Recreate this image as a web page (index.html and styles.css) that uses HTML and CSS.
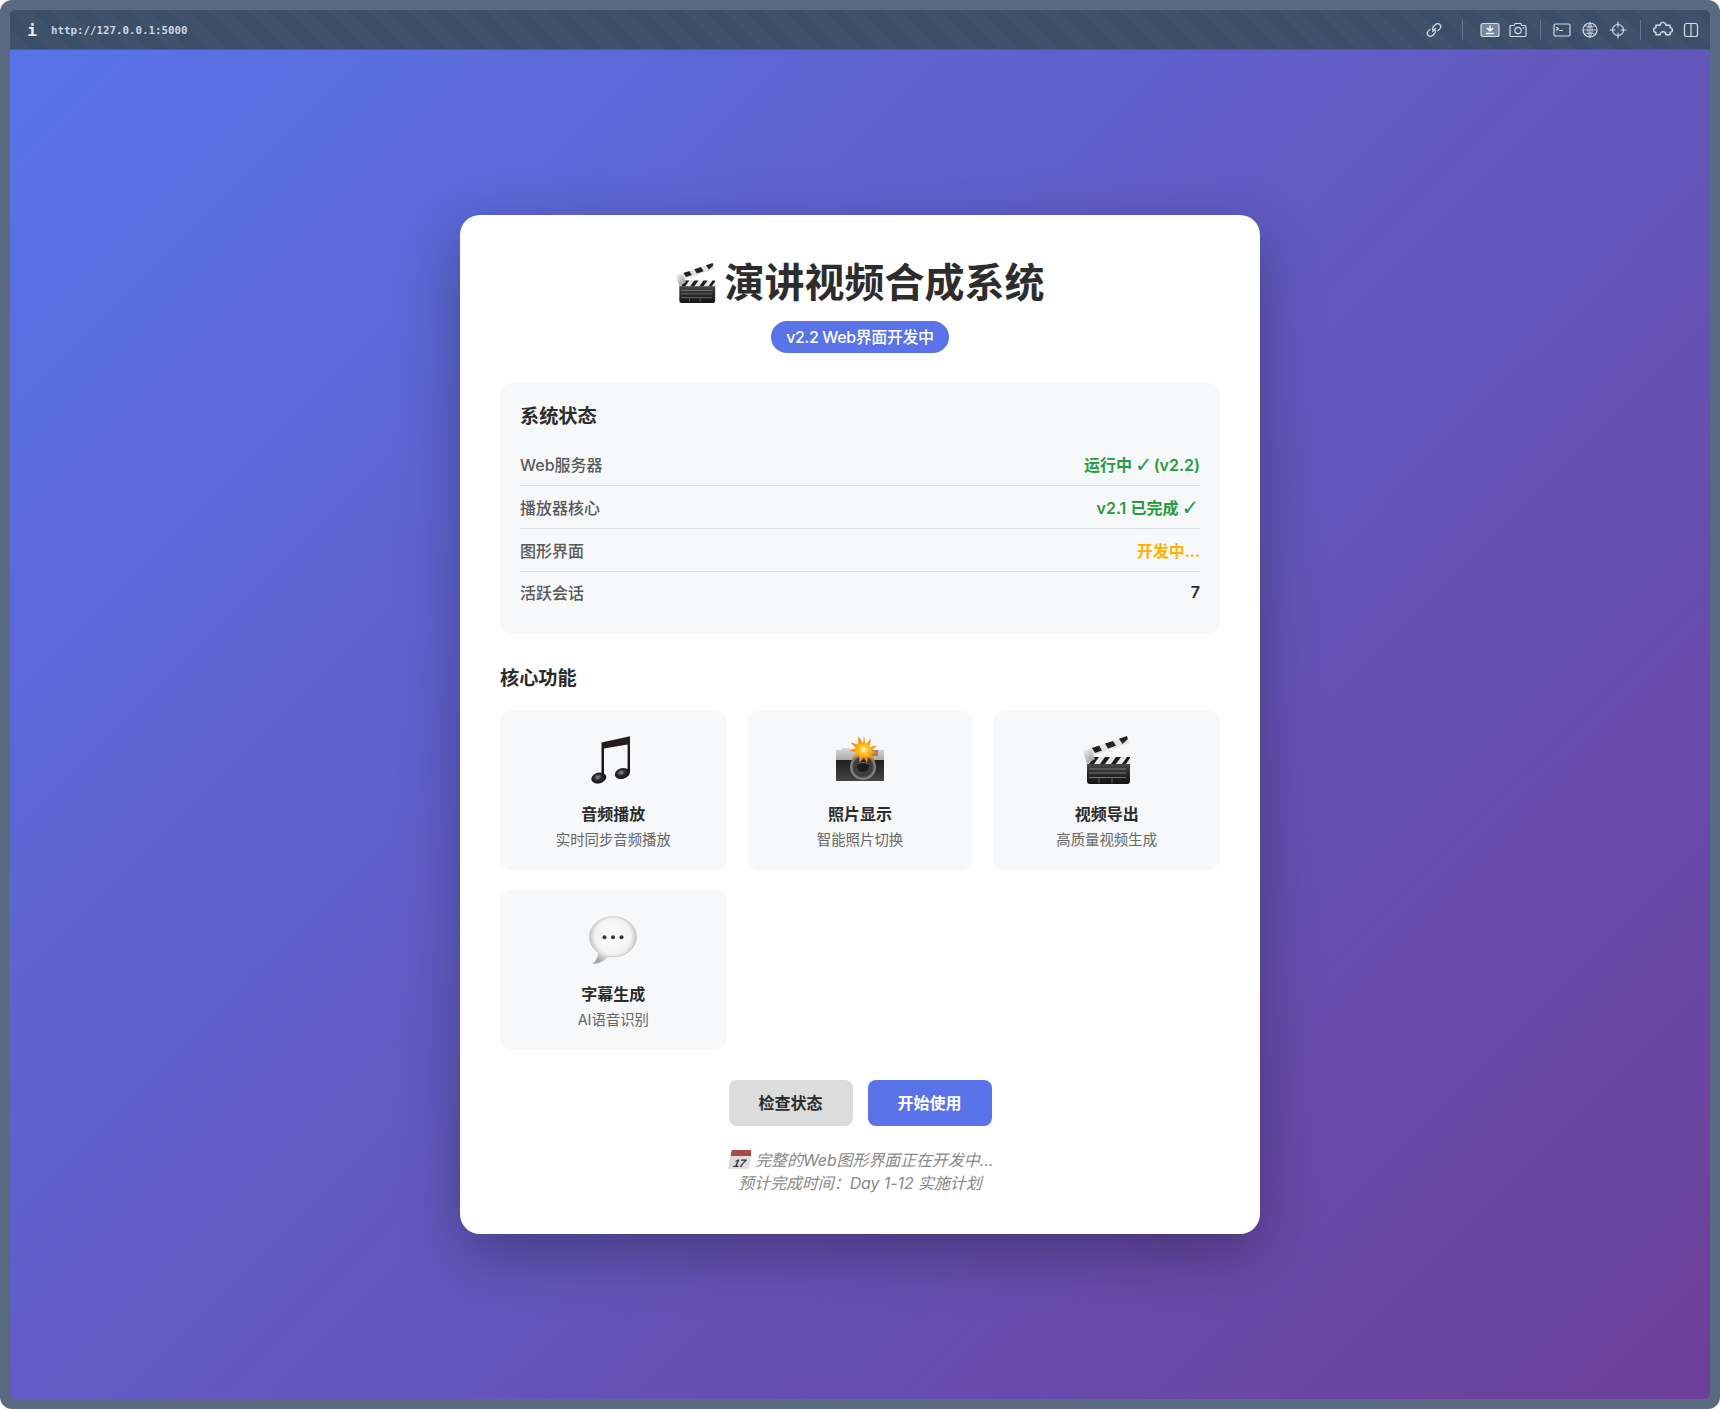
FILE: index.html
```html
<!DOCTYPE html>
<html lang="zh-CN">
<head>
    <meta charset="UTF-8">
    <meta name="viewport" content="width=device-width, initial-scale=1.0">
    <title>演讲视频合成系统</title>
    <link rel="stylesheet" href="styles.css">
</head>
<body>
    <svg class="defs" width="0" height="0" aria-hidden="true">
        <defs>
            <linearGradient id="clapBody" x1="0" y1="0" x2="0" y2="1">
                <stop offset="0" stop-color="#4a4a4a"/>
                <stop offset="0.5" stop-color="#2a2a2a"/>
                <stop offset="1" stop-color="#141414"/>
            </linearGradient>
            <linearGradient id="hinge" x1="0" y1="0" x2="1" y2="1">
                <stop offset="0" stop-color="#f2f2f2"/>
                <stop offset="1" stop-color="#8d8d8d"/>
            </linearGradient>
            <radialGradient id="noteHead" cx="0.45" cy="0.4" r="0.7">
                <stop offset="0" stop-color="#8f8f96"/>
                <stop offset="0.4" stop-color="#2a272b"/>
                <stop offset="1" stop-color="#0e0c0e"/>
            </radialGradient>
            <linearGradient id="noteStem" x1="0" y1="0" x2="0" y2="1">
                <stop offset="0" stop-color="#2a1c20"/>
                <stop offset="1" stop-color="#111"/>
            </linearGradient>
            <radialGradient id="bubble" cx="0.5" cy="0.42" r="0.58">
                <stop offset="0" stop-color="#ffffff"/>
                <stop offset="0.65" stop-color="#f3f3f3"/>
                <stop offset="1" stop-color="#a9a9a9"/>
            </radialGradient>
            <radialGradient id="flash" cx="0.5" cy="0.5" r="0.5">
                <stop offset="0" stop-color="#fffbd6"/>
                <stop offset="0.3" stop-color="#ffc21f"/>
                <stop offset="1" stop-color="#f0700a"/>
            </radialGradient>
            <linearGradient id="cameraTop" x1="0" y1="0" x2="0" y2="1">
                <stop offset="0" stop-color="#d8d8d8"/>
                <stop offset="1" stop-color="#a6a6a6"/>
            </linearGradient>
            <linearGradient id="cameraBody" x1="0" y1="0" x2="0" y2="1">
                <stop offset="0" stop-color="#1e1e1e"/>
                <stop offset="1" stop-color="#454545"/>
            </linearGradient>
            <symbol id="clapper" viewBox="0 0 48 48">
                <path d="M4 27h43v18a3 3 0 0 1-3 3H7a3 3 0 0 1-3-3z" fill="url(#clapBody)"/>
                <path d="M4 21h43v7H4z" fill="#e6e6e6"/>
                <path d="M6 28l5-7h5l-5 7zM17 28l5-7h5l-5 7zM28 28l5-7h5l-5 7zM39 28l5-7h3v1l-4 6z" fill="#1d1d1d"/>
                <path d="M6 33h37M6 37h37M6 41.500h37" stroke="#8a8a8a" stroke-width="0.8"/>
                <path d="M16 42v5M29 42v5" stroke="#777" stroke-width="0.8"/>
                <path d="M0 15L44 0l2 7L3 22z" fill="#e2e2e2"/>
                <path d="M9 12l7-2.400 3 4.900-7 2.400zM22 7.600l8-2.700 3 4.900-8 2.700zM36 2.800L44 0l.8 3-5.300 4.900z" fill="#222"/>
                <path d="M0 15l8-1 4 9-8 5-2-6z" fill="url(#hinge)"/>
            </symbol>
        </defs>
    </svg>

    <div class="window">
        <header class="toolbar">
            <span class="info-mark">i</span>
            <span class="url">http://127.0.0.1:5000</span>
            <div class="tools">
                <svg class="tool" viewBox="0 0 20 20"><path d="M8.500 11.500l3-3M6.200 9.200l-2 2a3 3 0 0 0 4.300 4.300l2-2a3 3 0 0 0 0-4.300M13.800 10.800l2-2a3 3 0 0 0-4.300-4.300l-2 2a3 3 0 0 0 0 4.300"/></svg>
                <span class="tool-sep tool-sep-wide"></span>
                <svg class="tool" viewBox="0 0 20 20"><rect x="1" y="3.500" width="18" height="13" rx="2" fill="#76879c"/><path class="tool-light" d="M10 6v4M7.500 8.500L10 11l2.500-2.500M6.500 13.500h7"/></svg>
                <svg class="tool tool-gap" viewBox="0 0 20 20"><path d="M2 6.500a1 1 0 0 1 1-1h3l1.200-2h5.600l1.200 2h3a1 1 0 0 1 1 1v9a1 1 0 0 1-1 1H3a1 1 0 0 1-1-1z"/><circle cx="10" cy="10.500" r="3.200"/><circle cx="15.500" cy="8" r="0.300"/></svg>
                <span class="tool-sep tool-sep-mid"></span>
                <svg class="tool" viewBox="0 0 20 20"><rect x="2" y="4" width="16" height="12" rx="1.500"/><path d="M4.500 7.500l2 1.300-2 1.300M7.500 10.500h3"/></svg>
                <svg class="tool tool-gap" viewBox="0 0 20 20"><circle cx="10" cy="10" r="7"/><path d="M3 10h14M10 3v14M5 5.500c3 2 7 2 10 0M5 14.500c3-2 7-2 10 0M10 3c-3 4-3 10 0 14M10 3c3 4 3 10 0 14" stroke-width="0.800"/></svg>
                <svg class="tool tool-gap" viewBox="0 0 20 20"><circle cx="10" cy="10" r="5.500"/><path d="M10 2v5M10 13v5M2 10h5M13 10h5"/></svg>
                <span class="tool-sep"></span>
                <svg class="tool" viewBox="1.500 1.500 17 17"><path d="M4 6h3.500a2.500 2.500 0 0 1 5 0H16v2a2 2 0 0 1 0 4v2h-3.500a2.500 2.500 0 0 0-5 0H4v-2a2 2 0 0 1 0-4z"/></svg>
                <svg class="tool tool-gap" viewBox="0 0 20 20"><rect x="3.500" y="3.500" width="13" height="13" rx="2"/><path d="M10 3.500v13"/></svg>
            </div>
        </header>

        <main class="content">
            <div class="container">
                <h1 class="page-title">
                    <svg class="title-icon" viewBox="0 0 48 48"><use href="#clapper"/></svg>
                    演讲视频合成系统
                </h1>
                <div class="badge-row"><span class="version-badge">v2.2 Web界面开发中</span></div>

                <section class="status-box">
                    <h3>系统状态</h3>
                    <div class="status-row">
                        <span class="status-label">Web服务器</span>
                        <span class="status-value ok">运行中<span class="check">✓</span>(v2.2)</span>
                    </div>
                    <div class="status-row">
                        <span class="status-label">播放器核心</span>
                        <span class="status-value ok">v2.1 已完成<span class="check">✓</span></span>
                    </div>
                    <div class="status-row">
                        <span class="status-label">图形界面</span>
                        <span class="status-value warn">开发中...</span>
                    </div>
                    <div class="status-row">
                        <span class="status-label">活跃会话</span>
                        <span class="status-value count">7</span>
                    </div>
                </section>

                <h3 class="section-title">核心功能</h3>
                <div class="feature-grid">
                    <div class="feature">
                        <svg class="feature-icon" viewBox="0 0 48 48">
                            <path d="M12.500 6.500L41 .3V37h-2.400V8.500L15 12.500V42h-2.500z" fill="url(#noteStem)"/>
                            <ellipse cx="9.800" cy="42" rx="7.600" ry="5.400" fill="url(#noteHead)" transform="rotate(-15 9.800 42)"/>
                            <ellipse cx="33.200" cy="37.500" rx="7.600" ry="5.400" fill="url(#noteHead)" transform="rotate(-15 33.200 37.500)"/>
                        </svg>
                        <div class="feature-name">音频播放</div>
                        <div class="feature-desc">实时同步音频播放</div>
                    </div>
                    <div class="feature">
                        <svg class="feature-icon" viewBox="0 0 48 48">
                            <path d="M0 14h5l1-2h8l1 2h33v11H0z" fill="url(#cameraTop)"/>
                            <path d="M0 24h48v21H0z" fill="url(#cameraBody)"/>
                            <rect x="33" y="14" width="9" height="6" fill="#8b8a78"/>
                            <circle cx="38.700" cy="22" r="1.200" fill="#f1b81f"/>
                            <circle cx="27" cy="31" r="13" fill="#7d7d7d"/>
                            <circle cx="27" cy="31" r="10.500" fill="#3f3f3f"/>
                            <circle cx="27" cy="30" r="6" fill="#1b1b1b"/>
                            <path d="M21.500 28c3-2 8-2 11 0" stroke="#777" fill="none"/>
                            <path d="M28 0l1.500 8 5.500-5-1.500 8 7.500-1.500-5.500 5 7 2-7.500 1.500 4 7-7-4.500-1 7-3-6.500-4.500 6-.5-7.500-7 3 4.500-6-7.500-2 7-2.500-5.500-5.500 7.500 2 .5-8 4.500 6.500z" fill="url(#flash)"/>
                        </svg>
                        <div class="feature-name">照片显示</div>
                        <div class="feature-desc">智能照片切换</div>
                    </div>
                    <div class="feature">
                        <svg class="feature-icon" viewBox="0 0 48 48"><use href="#clapper"/></svg>
                        <div class="feature-name">视频导出</div>
                        <div class="feature-desc">高质量视频生成</div>
                    </div>
                    <div class="feature">
                        <svg class="feature-icon" viewBox="0 0 48 48">
                            <path d="M24 .7C11 .7.500 9.600.500 20.700c0 6.500 3.600 12.200 9.200 15.900-.6 4.200-2.600 8.400-5.900 11.400 5.800-.6 11.300-3 15-7.600 1.700.3 3.400.4 5.200.4 13 0 23.500-9 23.500-20.100S37 .7 24 .7z" fill="url(#bubble)" stroke="#b5b5b5" stroke-width="0.600"/>
                            <circle cx="15.500" cy="21.300" r="2" fill="#333"/>
                            <circle cx="24" cy="21.300" r="2" fill="#333"/>
                            <circle cx="32.500" cy="21.300" r="2" fill="#333"/>
                        </svg>
                        <div class="feature-name">字幕生成</div>
                        <div class="feature-desc">AI语音识别</div>
                    </div>
                </div>

                <div class="actions">
                    <button class="btn btn-gray">检查状态</button>
                    <button class="btn btn-primary">开始使用</button>
                </div>

                <p class="note">
                    <svg class="note-icon" viewBox="0 0 24 20">
                        <g transform="skewX(-12) translate(4 0)">
                            <path d="M1 6h21v14H1z" fill="#dedede"/>
                            <path d="M1 1h21v6H1z" fill="#a94a48"/>
                            <text x="11.500" y="18" text-anchor="middle" class="note-day">17</text>
                        </g>
                    </svg>
                    完整的Web图形界面正在开发中...<br>
                    预计完成时间：Day 1-12 实施计划
                </p>
            </div>
        </main>
    </div>
</body>
</html>
```

FILE: styles.css
```css
* {
    box-sizing: border-box;
}

body {
    margin: 0;
    background-color: #fff;
    font-family: Inter, "Noto Sans CJK SC", sans-serif;
    color: #2b2b2b;
}

.defs {
    display: block;
    height: 0;
}

.window {
    display: flex;
    flex-direction: column;
    height: 1409px;
    padding: 10px;
    background-color: #5a6a80;
    border-radius: 12px;
    overflow: hidden;
}

.toolbar {
    display: flex;
    align-items: center;
    height: 40px;
    flex-shrink: 0;
    padding: 1px 9px 0 0;
    border-radius: 5px 5px 0 0;
    background-color: #3b4e68;
    background-image: repeating-linear-gradient(45deg, rgba(255, 255, 255, 0.018) 0 14px, transparent 14px 28px);
    border-bottom: 1px solid #4f5f78;
}

.info-mark {
    width: 24px;
    margin-left: 10px;
    margin-right: 7px;
    text-align: center;
    font-family: "DejaVu Sans Mono", monospace;
    font-size: 16px;
    font-weight: bold;
    color: #e8edf2;
}

.url {
    margin-top: 1px;
    font-family: "DejaVu Sans Mono", monospace;
    font-size: 10.8px;
    font-weight: bold;
    color: #ced6e0;
}

.tools {
    display: flex;
    align-items: center;
    margin-left: auto;
}

.tool {
    width: 20px;
    height: 20px;
    fill: none;
    stroke: #d5dde6;
    stroke-width: 1.2;
    stroke-linecap: round;
    stroke-linejoin: round;
}

.tool-gap {
    margin-left: 8px;
}

.tool-light {
    stroke: #f2f4f7;
    stroke-width: 1.6;
}

.tool-sep {
    width: 1px;
    height: 20px;
    margin: 0 12px;
    background-color: #66768c;
}

.tool-sep-wide {
    margin: 0 17px 0 18px;
}

.tool-sep-mid {
    margin: 0 11px 0 12px;
}

.content {
    flex: 1;
    display: flex;
    align-items: center;
    justify-content: center;
    border-radius: 0 0 6px 6px;
    background: linear-gradient(135deg, #5874e9 0%, #6c3f98 100%);
}

.container {
    width: 800px;
    height: 1019px;
    padding: 40px;
    background-color: #fff;
    border-radius: 20px;
    box-shadow: 0 20px 60px rgba(0, 0, 0, 0.3);
}

.page-title {
    display: flex;
    align-items: center;
    justify-content: center;
    gap: 9px;
    margin: 1px 0 11px;
    font-size: 40px;
    line-height: 54px;
    font-weight: 700;
    color: #2d2d2d;
}

.title-icon {
    width: 40px;
    height: 40px;
}

.badge-row {
    text-align: center;
    line-height: 0;
}

.version-badge {
    display: inline-block;
    padding: 4px 15px;
    background-color: #5a73e8;
    border-radius: 16px;
    color: #fff;
    font-size: 16px;
    font-weight: 500;
    letter-spacing: -0.4px;
    line-height: 24px;
}

.status-box {
    margin-top: 30px;
    padding: 20px;
    background-color: #f7f8fa;
    border-radius: 12px;
}

h3 {
    margin: 0;
    font-size: 19.2px;
    font-weight: 600;
    line-height: 27px;
    color: #2b2b2b;
}

.status-box h3 {
    margin-bottom: 13px;
}

.status-row {
    display: flex;
    justify-content: space-between;
    padding: 9px 0 7px;
    font-size: 16px;
    line-height: 26px;
    border-bottom: 1px solid #dcdde0;
}

.status-row:last-child {
    border-bottom: none;
    height: 42px;
    padding-top: 8px;
}

.status-label {
    font-weight: 500;
    color: #595959;
}

.status-value {
    font-weight: 600;
    color: #2b2b2b;
    white-space: nowrap;
}

.count {
    margin-top: -1px;
}

.check {
    margin: 0 1px 0 3px;
    font-family: "DejaVu Sans", sans-serif;
    font-size: 21px;
    font-weight: 700;
    line-height: 0;
    vertical-align: -1px;
}

.ok {
    color: #259b42;
}

.warn {
    color: #ffb300;
}

.section-title {
    margin: 31px 0 18px;
}

.feature-grid {
    display: grid;
    grid-template-columns: repeat(3, 1fr);
    gap: 20px;
}

.feature {
    height: 160px;
    padding: 26px 10px 20px;
    background-color: #f7f8fa;
    border-radius: 12px;
    text-align: center;
}

.feature-icon {
    display: block;
    width: 48px;
    height: 48px;
    margin: 0 auto 18px;
}

.feature-name {
    font-size: 16px;
    font-weight: 600;
    line-height: 24px;
    color: #2b2b2b;
}

.feature-desc {
    margin-top: 3px;
    font-size: 14.4px;
    line-height: 21px;
    color: #666;
}

.actions {
    display: flex;
    justify-content: center;
    gap: 15px;
    margin-top: 30px;
}

.btn {
    width: 124px;
    height: 46px;
    padding-bottom: 4px;
    border: none;
    border-radius: 8px;
    font-family: inherit;
    font-size: 16px;
    font-weight: 600;
    cursor: pointer;
}

.btn-gray {
    background-color: #dcdcdc;
    color: #2b2b2b;
}

.btn-primary {
    background-color: #5a73e8;
    color: #fff;
}

.note {
    margin: 23px 0 0;
    text-align: center;
    font-size: 16px;
    font-style: italic;
    letter-spacing: -0.1px;
    line-height: 23px;
    color: #888;
}

.note-icon {
    width: 24px;
    height: 20px;
    vertical-align: -3px;
}

.note-day {
    font-family: "Liberation Sans", sans-serif;
    font-size: 11px;
    font-weight: bold;
    fill: #333;
}
```
